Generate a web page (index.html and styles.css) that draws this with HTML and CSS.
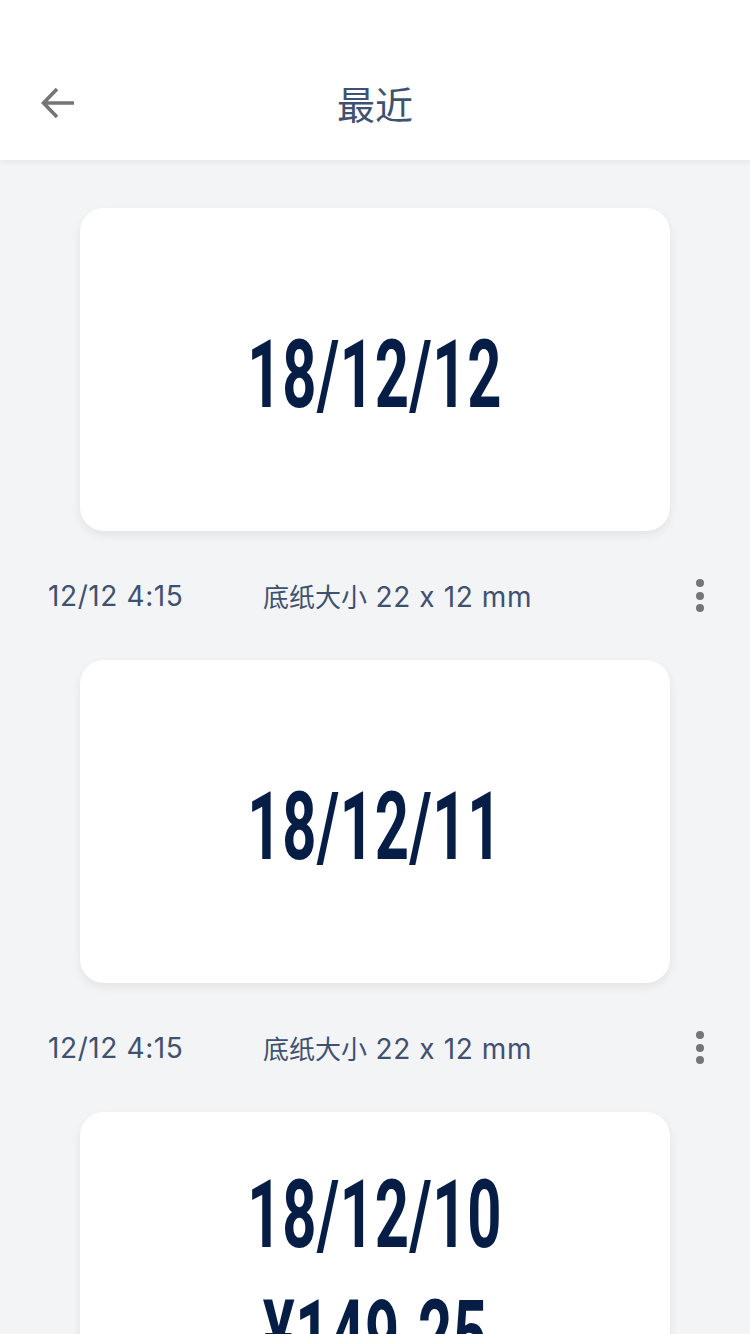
FILE: index.html
```html
<!DOCTYPE html>
<html lang="zh">
<head>
<meta charset="utf-8">
<link rel="stylesheet" href="styles.css">
</head>
<body>
<div class="page">
  <header class="topbar">
    <div class="toolbar">
      <button class="back" aria-label="返回">
        <svg width="36" height="36" viewBox="0 0 36 36"><path d="M34 18H4M17 4L3.5 18L17 32" fill="none" stroke="#757575" stroke-width="3.6"/></svg>
      </button>
      <h1 class="title">最近</h1>
      <span class="spacer"></span>
    </div>
  </header>
  <main class="list">
    <section class="item">
      <div class="card"><div class="big"><span>18/12/12</span></div></div>
      <div class="meta">
        <span class="time">12/12 4:15</span>
        <span class="size"><span class="cjk">底纸大小</span> 22 x 12 mm</span>
        <span class="more"><i></i><i></i><i></i></span>
      </div>
    </section>
    <section class="item">
      <div class="card"><div class="big"><span>18/12/11</span></div></div>
      <div class="meta">
        <span class="time">12/12 4:15</span>
        <span class="size"><span class="cjk">底纸大小</span> 22 x 12 mm</span>
        <span class="more"><i></i><i></i><i></i></span>
      </div>
    </section>
    <section class="item">
      <div class="card card-multi">
        <div class="big"><span>18/12/10</span></div>
        <div class="big"><span>¥149.25</span></div>
      </div>
    </section>
  </main>
</div>
</body>
</html>
```
FILE: styles.css
```css
* { box-sizing: border-box; }
html, body { margin: 0; padding: 0; }
body {
  width: 750px;
  height: 1334px;
  overflow: hidden;
  background: #f3f4f6;
  font-family: Inter, "Noto Sans CJK SC", sans-serif;
}
.page { display: flex; flex-direction: column; }
.topbar {
  background: #fff;
  height: 160px;
  padding-top: 60px;
  box-shadow: 0 2px 6px rgba(0,0,0,0.06);
  position: relative;
  z-index: 1;
}
.toolbar {
  height: 86px;
  display: flex;
  align-items: center;
  justify-content: space-between;
  padding: 0 40px;
}
.back {
  border: 0;
  background: none;
  padding: 0;
  width: 36px;
  height: 36px;
  display: flex;
}
.title {
  margin: 0;
  font-family: "Noto Sans CJK SC", sans-serif;
  font-weight: 400;
  font-size: 38px;
  color: #3f5170;
  line-height: 1;
}
.spacer { width: 36px; }
.list {
  display: flex;
  flex-direction: column;
  align-items: stretch;
  padding-top: 48px;
}
.item { display: flex; flex-direction: column; align-items: center; }
.card {
  width: 590px;
  height: 323px;
  background: #fff;
  border-radius: 24px;
  box-shadow: 0 4px 10px rgba(0,0,0,0.07);
  display: flex;
  flex-direction: column;
  align-items: center;
  justify-content: center;
  padding-top: 10px;
}
.card-multi {
  justify-content: flex-start;
  padding-top: 43px;
  height: 400px;
}
.big {
  font-family: Roboto, sans-serif;
  font-weight: 700;
  font-size: 94px;
  line-height: 120px;
  color: #061d45;
  display: flex;
  justify-content: center;
  height: 120px;
}
.big span {
  display: inline-block;
  transform: scaleX(0.635);
  letter-spacing: 1px;
}
.meta {
  width: 750px;
  height: 129px;
  display: flex;
  align-items: center;
  padding: 0 38px 0 48px;
  color: #3f5170;
  font-size: 28px;
  letter-spacing: 0.6px;
}
.time { width: 215px; font-family: Inter, sans-serif; }
.size { flex: 1; font-family: Inter, "Noto Sans CJK SC", sans-serif; }
.cjk { font-family: "Noto Sans CJK SC", sans-serif; font-size: 26px; letter-spacing: 0; }
.more {
  display: flex;
  flex-direction: column;
  gap: 4.5px;
  width: 24px;
  align-items: center;
}
.more i {
  display: block;
  width: 8px;
  height: 8px;
  border-radius: 50%;
  background: #757575;
}
```
